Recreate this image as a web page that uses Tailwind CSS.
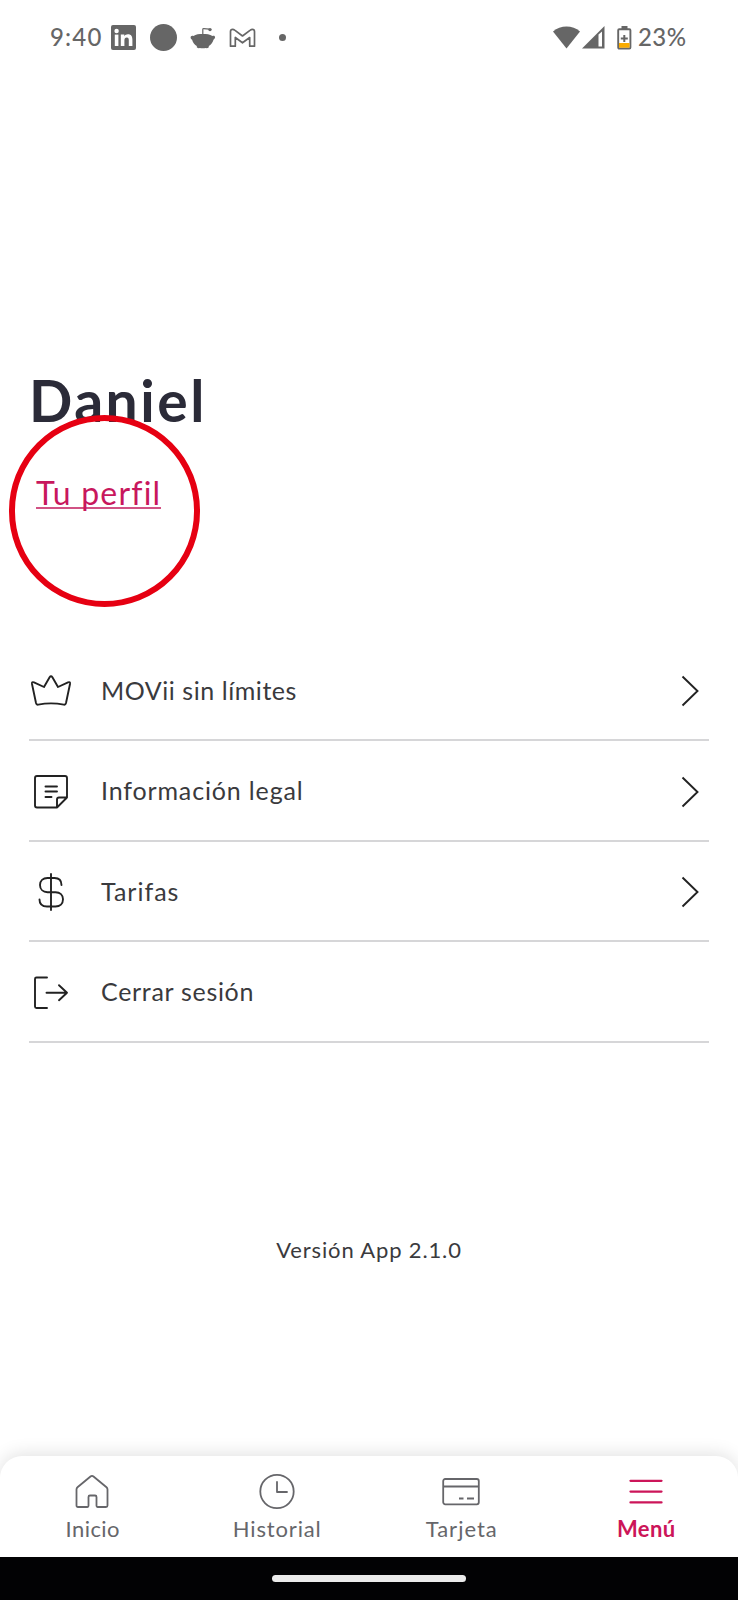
<!DOCTYPE html>
<html lang="es">
<head>
<meta charset="utf-8">
<title>Menú</title>
<script src="https://cdn.jsdelivr.net/npm/@tailwindcss/browser@4"></script>
</head>
<body class="bg-white">
<div class="relative flex h-[1600px] w-[738px] flex-col overflow-hidden bg-white font-['Lato','Open_Sans',sans-serif] text-[#3a3a3d]">

  <!-- Status bar -->
  <header class="flex h-[75px] items-center justify-between pr-[51px] pl-[50px] text-[#666666]">
    <div class="flex items-center">
      <span class="w-[61px] pb-[2px] text-[24px] leading-[30px] font-medium tracking-[1.200px]">9:40</span>
      <svg class="h-[25px] w-[25px]" viewBox="0 0 25 25"><rect width="25" height="25" rx="2" fill="currentColor"/><g fill="#fff"><circle cx="5.6" cy="6" r="2.2"/><rect x="3.8" y="9.6" width="3.6" height="11.4"/><path d="M9.8 9.6h3.5v1.6c.8-1.2 2-1.9 3.6-1.9 3.4 0 4.5 2.2 4.5 5.4V21h-3.6v-5.700c0-1.700-.4-2.900-2-2.900-1.700 0-2.400 1.200-2.400 2.900V21H9.800z"/></g></svg>
      <span class="ml-[14px] h-[27px] w-[27px] rounded-full bg-[#666666]"></span>
      <svg class="ml-[13px] h-[24px] w-[26px]" viewBox="0 0 26 24"><path d="M3.500 10C6 8.300 9 8 12.800 8s7 .3 9.700 2c2.800-1 3.600 2 1 3.700-.8 3-2.600 5-4.700 6.300v1.300q-1.200 1.200-3 .8-3 .5-6 0-1.800 .4-3-.8V20C4.700 18.700 2.800 16.700 2.100 13.700-.5 12 .5 9 3.500 10z" fill="currentColor"/><path d="M12.800 9V3.500q0-1 1-.9l5.500 .6" fill="none" stroke="currentColor" stroke-width="1.200"/><circle cx="20" cy="3.600" r="1.700" fill="currentColor"/></svg>
      <svg class="ml-[13px] h-[20px] w-[27px]" viewBox="0 0 27 20" fill="none" stroke="currentColor" stroke-width="1.700" stroke-linejoin="round"><path d="M1.500 3.500Q1.500 1.300 3.700 1.300q1 0 2 .8l7.800 5.900 7.800-5.900q1-.8 2-.8 2.200 0 2.200 2.200v14.700h-4.800V9.500L13.500 14.800 6.300 9.500v8.700H1.500z"/></svg>
      <span class="ml-[23px] h-[7px] w-[7px] rounded-full bg-[#666666]"></span>
    </div>
    <div class="flex items-center">
      <svg class="h-[23px] w-[27px]" viewBox="0 0 27 23"><path d="M0 5.500C7.500-1.200 19.500-1.200 27 5.500L13.500 22.500z" fill="currentColor"/></svg>
      <svg class="ml-[2px] h-[23px] w-[23px]" viewBox="0 0 23 23"><path d="M0 22.500 22.500 0v22.500z" fill="currentColor"/><path d="M16.500 8.500 20 5.500v15h-3.500z" fill="#fff"/></svg>
      <svg class="ml-[12px] h-[24px] w-[15px]" viewBox="0 0 15 24"><path d="M4.500 0h6v3h-6z" fill="currentColor"/><rect x="1.200" y="3.300" width="12.200" height="19.200" rx="1" fill="#fff" stroke="currentColor" stroke-width="1.900"/><path d="M2 17h10.600v4.700H2z" fill="#f9ab00"/><path d="M7.300 9v7M3.800 12.500h7" stroke="currentColor" stroke-width="2"/></svg>
      <span class="ml-[6px] w-[49px] pb-[2px] text-[24px] leading-[30px] font-medium tracking-[0.400px] whitespace-nowrap">23%</span>
    </div>
  </header>

  <!-- Profile -->
  <section class="relative h-[565.500px] px-[29px] pt-[289px]">
    <h1 class="text-[57px] leading-[72px] font-bold tracking-[2.500px] text-[#2b2b38]">Daniel</h1>
    <a class="mt-[42px] ml-[7px] block w-[125px] border-b-2 border-[#c2185b]/75 text-[32px] leading-[29px] tracking-[1.200px] whitespace-nowrap text-[#c8175d]">Tu perfil</a>
    <span class="absolute top-[340px] left-[9px] h-[192px] w-[191px] rounded-full border-[6px] border-[#e60012]"></span>
  </section>

  <!-- Options -->
  <nav class="mx-[29px] text-[25px]">
    <div class="flex h-[100.500px] items-center border-b-2 border-[#d6d6d8] pt-[3px] pr-[10px]">
      <svg class="h-[44px] w-[44px]" viewBox="0 0 44 44" fill="none" stroke="#222" stroke-width="1.900" stroke-linejoin="round" stroke-linecap="round"><path d="M3 15q-.4-2.500 2-1.600L15 18l5.600-9.800q1.400-2 2.800 0L29 18l10-4.600q2.400-.9 2 1.600L37 34q-.5 2-2.200 1.600Q22 33.100 9.200 35.600q-1.700 .4-2.200-1.600z"/></svg>
      <span class="ml-[28px] flex-1 pb-[2px] tracking-[0.550px]">MOVii sin límites</span>
      <svg class="h-[32px] w-[18px]" viewBox="0 0 18 32" fill="none" stroke="#222" stroke-width="1.900"><path d="M1.500 1.500 16.500 16 1.500 30.500"/></svg>
    </div>
    <div class="flex h-[100.500px] items-center border-b-2 border-[#d6d6d8] pt-[3px] pr-[10px]">
      <svg class="h-[44px] w-[44px]" viewBox="0 0 44 44" fill="none" stroke="#222" stroke-width="1.900" stroke-linejoin="round" stroke-linecap="round"><path d="M8 6h28q2 0 2 2V27.500L28 37.500H8q-2 0-2-2V8q0-2 2-2zM28 37.500v-8q0-2 2-2h8M16.500 16.500H28M16.500 21.500H28M16.500 27h6"/></svg>
      <span class="ml-[28px] flex-1 pb-[2px] tracking-[0.850px]">Información legal</span>
      <svg class="h-[32px] w-[18px]" viewBox="0 0 18 32" fill="none" stroke="#222" stroke-width="1.900"><path d="M1.500 1.500 16.500 16 1.500 30.500"/></svg>
    </div>
    <div class="flex h-[100.500px] items-center border-b-2 border-[#d6d6d8] pt-[3px] pr-[10px]">
      <svg class="h-[44px] w-[44px]" viewBox="0 0 44 44" fill="none" stroke="#222" stroke-width="1.900" stroke-linecap="round"><path d="M22 4v36M32.500 15C32.500 10.500 30 8 25.500 8H18.500c-4.500 0-7.500 2.800-7.500 7s3 7.200 7.500 7.200h8c4.500 0 7.500 2.800 7.500 7.100S31 36.500 26.500 36.500h-8.500c-4.500 0-7.500-2.500-7.500-7"/></svg>
      <span class="ml-[28px] flex-1 pb-[2px] tracking-[1px]">Tarifas</span>
      <svg class="h-[32px] w-[18px]" viewBox="0 0 18 32" fill="none" stroke="#222" stroke-width="1.900"><path d="M1.500 1.500 16.500 16 1.500 30.500"/></svg>
    </div>
    <div class="flex h-[100.500px] items-center border-b-2 border-[#d6d6d8] pt-[3px] pr-[10px]">
      <svg class="h-[44px] w-[44px]" viewBox="0 0 44 44" fill="none" stroke="#222" stroke-width="1.900" stroke-linejoin="round" stroke-linecap="round"><path d="M18 6.500H7.500q-1.500 0-1.500 1.500V35.500q0 1.500 1.500 1.500H18M17.500 21.700H38M30 14.200l8 7.500-8 7.500"/></svg>
      <span class="ml-[28px] flex-1 pb-[2px] tracking-[0.700px]">Cerrar sesión</span>
    </div>
  </nav>

  <p class="mt-[192px] text-center text-[22px] leading-[30px] tracking-[0.850px]">Versión App 2.1.0</p>

  <!-- Tab bar -->
  <footer class="mt-auto">
    <div class="grid h-[101px] grid-cols-4 rounded-t-[22px] bg-white pt-[15px] text-center text-[22px] leading-[28px] text-[#66666a] shadow-[0_-2px_18px_rgba(0,0,0,0.12)]">
      <div class="flex flex-col items-center gap-[2px]">
        <svg class="h-[42px] w-[42px]" viewBox="0 0 42 42" fill="none" stroke="currentColor" stroke-width="1.800" stroke-linejoin="round"><path d="M5.500 18.500q0-1.500 1-2.300L19.500 5.500q1.500-1.200 3 0l13 10.700q1 .8 1 2.300V34.500q0 1.500-1.500 1.500h-8.500q-1 0-1-1.200V26q0-1.500-1.500-1.500h-5q-1.500 0-1.500 1.500v8.800q0 1.200-1 1.200H7Q5.500 36 5.500 34.500z"/></svg>
        <span class="pl-px tracking-[0.450px]">Inicio</span>
      </div>
      <div class="flex flex-col items-center gap-[2px]">
        <svg class="h-[42px] w-[42px]" viewBox="0 0 42 42" fill="none" stroke="currentColor" stroke-width="1.800" stroke-linecap="round"><circle cx="21" cy="20.500" r="16.700"/><path d="M21 11v10h10" stroke-linejoin="round"/></svg>
        <span class="pl-px tracking-[0.850px]">Historial</span>
      </div>
      <div class="flex flex-col items-center gap-[2px]">
        <svg class="h-[42px] w-[42px]" viewBox="0 0 42 42" fill="none" stroke="currentColor" stroke-width="1.800"><rect x="3.200" y="8" width="35.600" height="25.300" rx="2"/><path d="M3.200 15.500h35.600M19 27.500h4.500M27 27.500h7"/></svg>
        <span class="pl-px tracking-[1px]">Tarjeta</span>
      </div>
      <div class="flex flex-col items-center gap-[2px] font-bold text-[#cc1559]">
        <svg class="h-[42px] w-[42px]" viewBox="0 0 42 42" fill="none" stroke="currentColor" stroke-width="2.300" stroke-linecap="round"><path d="M5.500 9.800h31M5.500 20.600h31M5.500 31.400h31"/></svg>
        <span class="pl-px tracking-[0.400px]">Menú</span>
      </div>
    </div>
    <div class="flex h-[43px] justify-center bg-[#020204] pt-[18px]">
      <span class="h-[7px] w-[194px] rounded-full bg-[#ebebeb]"></span>
    </div>
  </footer>
</div>
</body>
</html>
